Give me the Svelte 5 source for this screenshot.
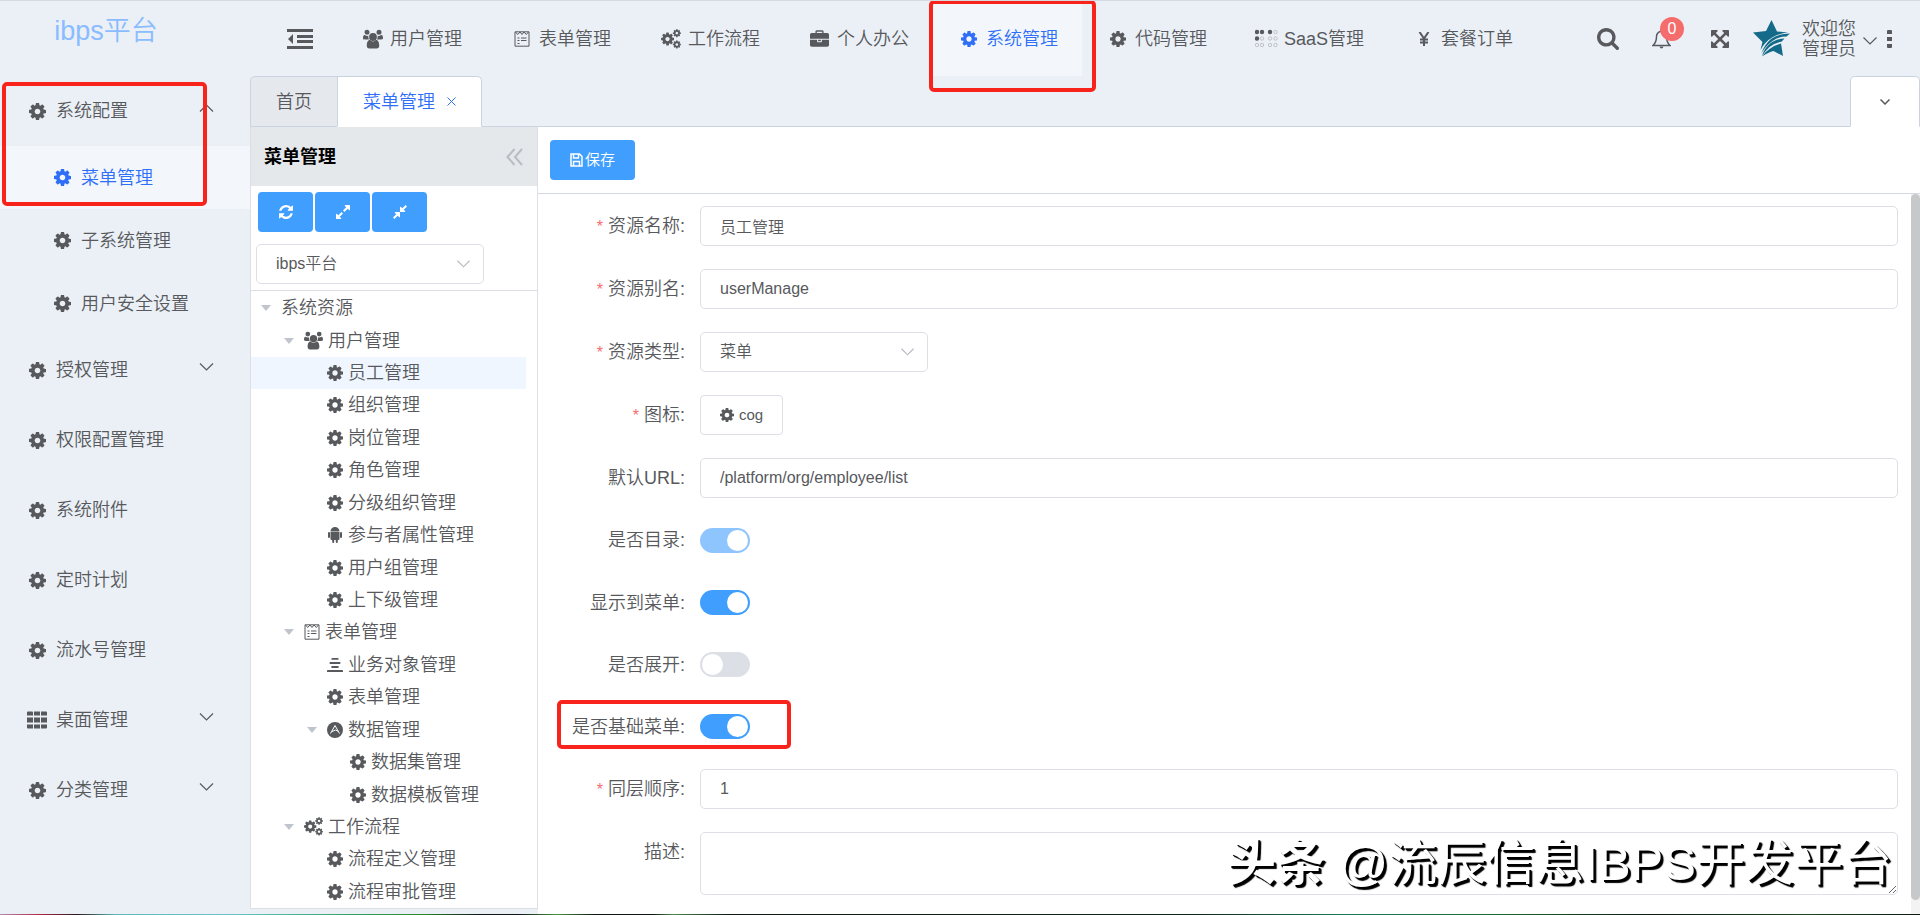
<script>
  const cog = 'M1152 896q0-106-75-181t-181-75-181 75-75 181 75 181 181 75 181-75 75-181zm512-109v222q0 12-8 23t-20 13l-185 28q-19 54-39 91 35 50 107 138 10 12 10 25t-9 23q-27 37-99 108t-94 71q-12 0-26-9l-138-108q-44 23-91 38-16 136-29 186-7 28-36 28h-222q-14 0-24.5-8.5t-11.5-21.5l-28-184q-49-16-90-37l-141 107q-10 9-25 9-14 0-25-11-126-114-165-168-7-10-7-23 0-12 8-23 15-21 51-66.5t54-70.5q-27-50-41-99l-183-27q-13-2-21-12.5t-8-23.5v-222q0-12 8-23t19-13l186-28q14-46 39-92-40-57-107-138-10-12-10-24 0-10 9-23 26-36 98.5-107.5t94.5-71.5q13 0 26 10l138 107q44-23 91-38 16-136 29-186 7-28 36-28h222q14 0 24.5 8.5t11.5 21.5l28 184q49 16 90 37l142-107q9-9 24-9 13 0 25 10 129 119 165 170 7 8 7 22 0 12-8 23-15 21-51 66.5t-54 70.5q26 50 41 98l183 28q13 2 21 12.5t8 23.5z';

  // filled icons: viewBox + path
  const icons = {
    cog: { box: '128 128 1536 1536', d: cog },
    users: { box: '0 0 20 19', d: 'M10 3.6a3.9 3.9 0 1 1 0 7.8 3.9 3.9 0 0 1 0-7.8zM4 .2a2.5 2.5 0 1 1 0 5A2.5 2.5 0 0 1 4 .2zM16 .2a2.5 2.5 0 1 1 0 5 2.5 2.5 0 0 1 0-5zM3.8 16.2c0-3 .9-5.600 3.100-5.600.9.8 1.900 1.300 3.100 1.300s2.200-.5 3.100-1.300c2.200 0 3.100 2.600 3.100 5.600 0 1.700-1 2.700-2.500 2.700H6.300c-1.500 0-2.500-1-2.500-2.700zM0 8.800c0-2 .5-3.200 1.700-3.200.7.5 1.500.8 2.300.8.5 0 .9 0 1.300-.2-.1 1.400.1 2.700.8 3.700H1.900C.7 9.900 0 9.700 0 8.800zM20 8.800c0-2-.5-3.200-1.700-3.200-.7.5-1.500.8-2.300.8-.5 0-.9 0-1.300-.2.1 1.400-.1 2.700-.8 3.700h4.200c1.200 0 1.900-.2 1.900-1.100z' },
    briefcase: { box: '0 0 1792 1536', d: 'M640 256h512v-128h-512v128zm1152 640v480q0 66-47 113t-113 47h-1472q-66 0-113-47t-47-113v-480h672v160q0 26 19 45t45 19h320q26 0 45-19t19-45v-160h672zm-768 0v128h-256v-128h256zm768-480v384h-1792v-384q0-66 47-113t113-47h352v-160q0-40 28-68t68-28h576q40 0 68 28t28 68v160h352q66 0 113 47t47 113z' },
    refresh: { box: '128 128 1536 1536', d: 'M1639 1056q0 5-1 7-64 268-268 434.5t-478 166.5q-146 0-282.5-55t-243.5-157l-129 129q-19 19-45 19t-45-19-19-45v-448q0-26 19-45t45-19h448q26 0 45 19t19 45-19 45l-137 137q71 66 161 102t187 36q134 0 250-65t186-179q11-17 53-117 8-23 30-23h192q13 0 22.5 9.5t9.5 22.5zm25-800v448q0 26-19 45t-45 19h-448q-26 0-45-19t-19-45 19-45l138-138q-148-137-349-137-134 0-250 65t-186 179q-11 17-53 117-8 23-30 23h-199q-13 0-22.5-9.5t-9.5-22.5v-7q65-268 270-434.5t480-166.5q146 0 284 55.5t245 156.5l130-129q19-19 45-19t45 19 19 45z' },
    expand: { box: '128 128 1536 1536', d: 'M883 1056q0 13-10 23l-332 332 144 144q19 19 19 45t-19 45-45 19h-448q-26 0-45-19t-19-45v-448q0-26 19-45t45-19 45 19l144 144 332-332q10-10 23-10t23 10l114 114q10 10 10 23zm781-864v448q0 26-19 45t-45 19-45-19l-144-144-332 332q-10 10-23 10t-23-10l-114-114q-10-10-10-23t10-23l332-332-144-144q-19-19-19-45t19-45 45-19h448q26 0 45 19t19 45z' },
    compress: { box: '128 128 1536 1536', d: 'M896 960v448q0 26-19 45t-45 19-45-19l-144-144-332 332q-10 10-23 10t-23-10l-114-114q-10-10-10-23t10-23l332-332-144-144q-19-19-19-45t19-45 45-19h448q26 0 45 19t19 45zm755-672q0 13-10 23l-332 332 144 144q19 19 19 45t-19 45-45 19h-448q-26 0-45-19t-19-45v-448q0-26 19-45t45-19 45 19l144 144 332-332q10-10 23-10t23 10l114 114q10 10 10 23z' },
    search: { box: '64 128 1664 1664', d: 'M1216 832q0-185-131.5-316.5t-316.5-131.5-316.5 131.5-131.5 316.5 131.5 316.5 316.5 131.5 316.5-131.5 131.5-316.5zm512 832q0 52-38 90t-90 38q-54 0-90-38l-343-342q-179 124-399 124-143 0-273.5-55.5t-225-150-150-225-55.5-273.5 55.5-273.5 150-225 225-150 273.5-55.5 273.5 55.5 225 150 150 225 55.5 273.5q0 220-124 399l343 343q37 37 37 90z' },
    full: { box: '128 128 1536 1536', d: 'M1411 541l-355 355 355 355 144-144q29-31 70-14 39 17 39 59v448q0 26-19 45t-45 19h-448q-42 0-59-40-17-39 14-69l144-144-355-355-355 355 144 144q31 30 14 69-17 40-59 40h-448q-26 0-45-19t-19-45v-448q0-42 40-59 39-17 69 14l144 144 355-355-355-355-144 144q-19 19-45 19-12 0-24-5-40-17-40-59v-448q0-26 19-45t45-19h448q42 0 59 40 17 39-14 69l-144 144 355 355 355-355-144-144q-31-30-14-69 17-40 59-40h448q26 0 45 19t19 45v448q0 42-39 59-13 5-25 5-26 0-45-19z' },
    th: { box: '0 0 20 17', d: 'M1 0h4a1 1 0 0 1 1 1v3H0V1a1 1 0 0 1 1-1zM7 0h6v4H7zM14 0h5a1 1 0 0 1 1 1v3h-6zM0 6h6v5H0zM7 6h6v5H7zM14 6h6v5h-6zM0 13h6v4H1a1 1 0 0 1-1-1zM7 13h6v4H7zM14 13h6v3a1 1 0 0 1-1 1h-5z' },
    fold: { box: '0 0 26 20', d: 'M0 0h26v3H0zM10 6h16v3H10zM10 11h16v3H10zM0 17h26v3H0zM6 5v10L1 10z' },
    dots: { box: '0 0 5 18', d: 'M1 0h3q1 0 1 1v3H0V1q0-1 1-1zM0 7h5v4H0zM0 14h5v3q0 1-1 1H1q-1 0-1-1z' },
    android: { box: '0 0 14 16', d: 'M2.500 4.500a4.500 4.500 0 0 1 9 0zM2.500 5h9v7q0 1-1 1H9.800v2q0 1-1 1t-1-1v-2H6.200v2q0 1-1 1t-1-1v-2h-.7q-1 0-1-1zM1 5q1 0 1 1v4q0 1-1 1t-1-1V6q0-1 1-1zM13 5q1 0 1 1v4q0 1-1 1t-1-1V6q0-1 1-1z' },
    layers: { box: '0 0 18 16', d: 'M6 0h6q1 0 1 1v1H5V1q0-1 1-1zM3 4.500h12V7H3zM5 9h8v2.500H5zM1 13.500h16q1 0 1 1V16H0v-1.500q0-1 1-1z' },
    caret: { box: '0 0 10 6', d: 'M0 0h10L5 6z' }
  };

  const menus = [
    { label: '用户管理', icon: 'users', size: 20 },
    { label: '表单管理', icon: 'form', size: 16 },
    { label: '工作流程', icon: 'cogs', size: 20 },
    { label: '个人办公', icon: 'briefcase', size: 19 },
    { label: '系统管理', icon: 'cog', size: 16, active: true },
    { label: '代码管理', icon: 'cog', size: 16 },
    { label: 'SaaS管理', icon: 'saas', size: 23 },
    { label: '套餐订单', icon: 'yen', size: 12 }
  ];

  const groups = [
    {
      label: '系统配置',
      open: true,
      children: [
        { label: '菜单管理', active: true },
        { label: '子系统管理' },
        { label: '用户安全设置' }
      ]
    },
    { label: '授权管理', more: true },
    { label: '权限配置管理' },
    { label: '系统附件' },
    { label: '定时计划' },
    { label: '流水号管理' },
    { label: '桌面管理', icon: 'th', more: true },
    { label: '分类管理', more: true }
  ];

  const tree = [
    { label: '系统资源', level: 0, open: true },
    { label: '用户管理', level: 1, open: true, icon: 'users', size: 19 },
    { label: '员工管理', level: 2, icon: 'cog', active: true },
    { label: '组织管理', level: 2, icon: 'cog' },
    { label: '岗位管理', level: 2, icon: 'cog' },
    { label: '角色管理', level: 2, icon: 'cog' },
    { label: '分级组织管理', level: 2, icon: 'cog' },
    { label: '参与者属性管理', level: 2, icon: 'android' },
    { label: '用户组管理', level: 2, icon: 'cog' },
    { label: '上下级管理', level: 2, icon: 'cog' },
    { label: '表单管理', level: 1, open: true, icon: 'form', size: 16 },
    { label: '业务对象管理', level: 2, icon: 'layers' },
    { label: '表单管理', level: 2, icon: 'cog' },
    { label: '数据管理', level: 2, open: true, icon: 'data' },
    { label: '数据集管理', level: 3, icon: 'cog' },
    { label: '数据模板管理', level: 3, icon: 'cog' },
    { label: '工作流程', level: 1, open: true, icon: 'cogs', size: 19 },
    { label: '流程定义管理', level: 2, icon: 'cog' },
    { label: '流程审批管理', level: 2, icon: 'cog' }
  ];

  let form = $state({
    name: '员工管理',
    alias: 'userManage',
    type: '菜单',
    url: '/platform/org/employee/list',
    folder: true,
    visible: true,
    opened: false,
    base: true,
    sn: '1',
    desc: ''
  });
</script>

{#snippet icon(name, size = 16)}
  {#if name === 'cogs'}
    <svg class="icon" width={size} height={size} viewBox="0 0 20 20" aria-hidden="true">
      <g fill="currentColor" fill-rule="evenodd">
        <path transform="translate(-1 2.500) scale(.0084)" d={cog} />
        <path transform="translate(11.200 -.5) scale(.0052)" d={cog} />
        <path transform="translate(11.200 10.800) scale(.0052)" d={cog} />
      </g>
    </svg>
  {:else if name === 'form'}
    <svg class="icon" width={size} height={size} viewBox="0 0 16 16" fill="none" stroke="currentColor" aria-hidden="true">
      <path d="M1 .8h14v14.400H1zM1.500 1l2.200 2.500L6 1l2 2.500L10 1l2.300 2.500L14.500 1M3.500 7h2M7 7h5.500M3.500 9.500h2M7 9.500h5.500M3.500 12.500h2" />
    </svg>
  {:else if name === 'saas'}
    <svg class="icon" width={size} height="20" viewBox="0 0 23 20" aria-hidden="true">
      {#each [2, 7, 15, 20.5] as x, c}
        {#each [3, 9.5, 16] as y, r}
          {#if r === 0 && c < 3 || r === 1 && c === 0}
            <circle cx={x} cy={y} r="2.200" fill="currentColor" />
          {:else}
            <circle cx={x} cy={y} r="1.700" fill="none" stroke="#b4b8bd" stroke-width=".8" />
          {/if}
        {/each}
      {/each}
    </svg>
  {:else if name === 'yen'}
    <svg class="icon" width={size} height="14" viewBox="0 0 12 14" fill="none" stroke="currentColor" stroke-width="2" aria-hidden="true">
      <path d="M1.500 0L6 6.500 10.500 0M6 6v8M2 7.500h8M2 10.500h8" />
    </svg>
  {:else if name === 'data'}
    <svg class="icon" width={size} height={size} viewBox="0 0 16 16" aria-hidden="true">
      <circle cx="8" cy="8" r="8" fill="currentColor" />
      <path d="M3.500 11.500L8 3.500l4.500 8M5 9.500q4-3 6.500 0" fill="none" stroke="#fff" />
    </svg>
  {:else}
    <svg class="icon" width={size} height={size} viewBox={icons[name].box} fill="currentColor" fill-rule="evenodd" aria-hidden="true">
      <path d={icons[name].d} />
    </svg>
  {/if}
{/snippet}

{#snippet chevron(width = 14, up = false)}
  <svg class="icon" {width} height="8" viewBox="0 0 14 8" fill="none" stroke="currentColor" stroke-width="1.200" aria-hidden="true">
    <path d={up ? 'M.5 7.500L7 1l6.500 6.500' : 'M.5 .5L7 7 13.500.5'} />
  </svg>
{/snippet}

{#snippet toggle(id, label, key, disabled = false)}
  <div class="field">
    <label for={id}>{label}:</label>
    <input {id} class="switch" type="checkbox" role="switch" bind:checked={form[key]} {disabled} />
    {#if key === 'base'}<span class="mark mark-field"></span>{/if}
  </div>
{/snippet}

<div class="app">
  <div class="layout">
    <aside class="sidebar">
      <div class="logo">ibps平台</div>
      <nav class="side-menu" aria-label="系统管理">
        <span class="mark mark-side"></span>
        {#each groups as group}
          <a class="group" href="#menu">
            <span class="side-icon">{@render icon(group.icon ?? 'cog', group.icon ? 20 : 17)}</span>
            <span>{group.label}</span>
            {#if group.open || group.more}
              <span class="arrow">{@render chevron(15, group.open)}</span>
            {/if}
          </a>
          {#each group.children ?? [] as child}
            <a class="child" class:active={child.active} href="#menu">
              <span class="side-icon">{@render icon('cog', 17)}</span>
              <span>{child.label}</span>
            </a>
          {/each}
        {/each}
      </nav>
    </aside>

    <div class="content">
      <header class="topbar">
        <button class="plain fold" type="button" aria-label="折叠菜单">
          <svg width="26" height="20" viewBox={icons.fold.box} fill="currentColor"><path d={icons.fold.d} /></svg>
        </button>
        <nav class="top-menu">
          {#each menus as item}
            <a class="top-item" class:active={item.active} href="#top">
              <span class="top-icon">{@render icon(item.icon, item.size)}</span>
              <span>{item.label}</span>
              {#if item.active}<span class="mark mark-top"></span>{/if}
            </a>
          {/each}
        </nav>
        <div class="tools">
          <button class="plain search" type="button" aria-label="搜索">{@render icon('search', 22)}</button>
          <button class="plain bell" type="button" aria-label="消息">
            <svg width="19" height="20" viewBox="0 0 19 20" fill="none" stroke="currentColor" stroke-width="1.500">
              <path d="M1 16.500h17q-3.500-3-3.500-9 0-4-5-5.500-5 1.500-5 5.500 0 6-3.500 9zM9.500 2V.5" />
              <path d="M7.500 17.500h4q-.5 2-2 2t-2-2z" fill="currentColor" stroke="none" />
            </svg>
            <span class="badge">0</span>
          </button>
          <button class="plain full" type="button" aria-label="全屏">{@render icon('full', 18)}</button>
          <button class="plain user" type="button">
            <svg width="37" height="37" viewBox="0 0 37 37" fill="#146a89" aria-hidden="true">
              <path d="M18.500 0L24 11.500l11 1q-8 .5-15 4.500Q12 21.500 7.500 30l2-8L0 12.500l13-1.500z" />
              <path d="M37 13.500l-3.500 3q-8 0-14 4.500-6.500 4.500-11 12 3-8.500 9.500-14 7.500-5.500 19-5.500z" />
              <path d="M31.500 18.500l-3 3.200q-7.500 1.300-12 5.300-3.500 3-7.500 9 2-7 7-11.500 6-5.500 15.500-6z" />
              <path d="M28 23.500l2 12.500-9.500-5q-5 1-11.500 5.500 3.500-5 7.500-7.500 4-3.500 11.500-5.500z" />
            </svg>
            <span class="welcome">欢迎您<br />管理员</span>
            <span class="user-arrow">{@render chevron(14)}</span>
          </button>
          <button class="plain more" type="button" aria-label="更多">
            <svg width="5" height="18" viewBox={icons.dots.box} fill="currentColor"><path d={icons.dots.d} /></svg>
          </button>
        </div>
      </header>

      <div class="tabs">
        <button class="tab first" type="button">首页</button>
        <button class="tab current" type="button">
          菜单管理
          <svg width="9" height="9" viewBox="0 0 9 9" stroke="currentColor" aria-hidden="true"><path d="M.5 .5l8 8M8.500 .5l-8 8" /></svg>
        </button>
        <span class="tab-line"></span>
        <button class="tab drop" type="button" aria-label="标签操作">
          <svg width="10" height="6" viewBox="0 0 10 6" fill="none" stroke="currentColor" stroke-width="1.500"><path d="M.5 .5L5 5 9.500 .5" /></svg>
        </button>
      </div>

      <div class="work">
        <section class="panel">
          <div class="panel-head">
            <h2>菜单管理</h2>
            <button class="plain collapse" type="button" aria-label="收起">
              <svg width="17" height="18" viewBox="0 0 17 18" fill="none" stroke="currentColor" stroke-width="2"><path d="M8.500 1L1.500 9l7 8M16 1L9 9l7 8" /></svg>
            </button>
          </div>
          <div class="panel-tools">
            <button class="primary" type="button" aria-label="刷新">{@render icon('refresh', 14)}</button>
            <button class="primary" type="button" aria-label="展开">{@render icon('expand', 14)}</button>
            <button class="primary" type="button" aria-label="折叠">{@render icon('compress', 14)}</button>
          </div>
          <div class="platform">
            <div class="select">
              <select aria-label="平台"><option>ibps平台</option></select>
              <span>{@render chevron(13)}</span>
            </div>
          </div>
          <ul class="tree">
            {#each tree as node}
              <li class:active={node.active} style="padding-left: {10 + node.level * 23}px">
                <span class="caret">{#if node.open}{@render icon('caret', 10)}{/if}</span>
                {#if node.icon}{@render icon(node.icon, node.size ?? 16)}{/if}
                <span>{node.label}</span>
              </li>
            {/each}
          </ul>
        </section>

        <section class="editor">
          <div class="toolbar">
            <button class="primary save" type="button">
              <svg width="13" height="14" viewBox="0 0 13 14" fill="none" stroke="currentColor" stroke-width="1.500" aria-hidden="true"><path d="M1 1h8.500L12 3.500V13H1zM3.500 1v4h5V1M3.500 13V8.500h6V13" /></svg>
              <span>保存</span>
            </button>
          </div>
          <div class="scroll">
            <form class="form">
              <div class="field required">
                <label for="name">资源名称:</label>
                <input id="name" class="text" type="text" bind:value={form.name} />
              </div>
              <div class="field required">
                <label for="alias">资源别名:</label>
                <input id="alias" class="text" type="text" bind:value={form.alias} />
              </div>
              <div class="field required">
                <label for="type">资源类型:</label>
                <div class="select">
                  <select id="type" bind:value={form.type}><option>菜单</option></select>
                  <span>{@render chevron(13)}</span>
                </div>
              </div>
              <div class="field required">
                <label for="icon">图标:</label>
                <button id="icon" class="pick" type="button">{@render icon('cog', 14)}<span>cog</span></button>
              </div>
              <div class="field">
                <label for="url">默认URL:</label>
                <input id="url" class="text" type="text" bind:value={form.url} />
              </div>
              {@render toggle('folder', '是否目录', 'folder', true)}
              {@render toggle('visible', '显示到菜单', 'visible')}
              {@render toggle('opened', '是否展开', 'opened')}
              {@render toggle('base', '是否基础菜单', 'base')}
              <div class="field required">
                <label for="sn">同层顺序:</label>
                <input id="sn" class="text" type="text" bind:value={form.sn} />
              </div>
              <div class="field">
                <label for="desc">描述:</label>
                <textarea id="desc" class="text" bind:value={form.desc}></textarea>
              </div>
            </form>
            <div class="scrollbar"><div class="thumb"></div></div>
          </div>
        </section>
      </div>
    </div>
  </div>
  <div class="strip"></div>
  <div class="watermark"><b>头条</b> @流辰信息IBPS开发平台</div>
</div>

<style>
  :global(body) {
    background: #ebf0f6;
  }

  .app {
    position: relative;
    display: flex;
    flex-direction: column;
    height: 100vh;
    min-height: 860px;
    box-sizing: border-box;
    border-top: 1px solid #d5dae1;
    overflow: hidden;
    color: #57595d;
    font-family: 'Liberation Sans', 'Noto Sans CJK SC', sans-serif;
    font-size: 18px;
    font-weight: 350;
    line-height: 24px;
  }

  .app *,
  .app *::before {
    box-sizing: border-box;
  }

  a {
    color: inherit;
    text-decoration: none;
  }

  button,
  input,
  select,
  textarea {
    margin: 0;
    color: inherit;
    font: inherit;
  }

  button {
    cursor: pointer;
  }

  .icon,
  svg {
    display: block;
    flex: none;
  }

  .plain {
    display: flex;
    align-items: center;
    padding: 0;
    border: 0;
    background: none;
  }

  .layout {
    display: grid;
    flex: 1;
    grid-template-columns: 250px minmax(0, 1fr);
    min-height: 0;
  }

  /* sidebar */
  .logo {
    height: 75px;
    padding: 12px 38px 0 0;
    color: #8abcff;
    font-size: 27px;
    line-height: 36px;
    text-align: center;
  }

  .side-menu {
    position: relative;
    display: flex;
    flex-direction: column;
  }

  .group,
  .child {
    display: flex;
    align-items: center;
    height: 70px;
    padding: 0 36px 0 27px;
  }

  .child {
    height: 63px;
    padding-left: 52px;
  }

  .child.active,
  .top-item.active {
    background: #f3f7fb;
    color: #2f6ff8;
  }

  .side-icon {
    display: flex;
    justify-content: center;
    width: 20px;
    margin-right: 9px;
  }

  .arrow {
    margin-left: auto;
    padding-bottom: 6px;
  }

  /* red callouts lie over the page */
  .mark {
    position: absolute;
    z-index: 2;
    border: 4px solid #f8241b;
    border-radius: 5px;
    pointer-events: none;
  }

  .mark-side {
    top: 6px;
    left: 2px;
    width: 205px;
    height: 124px;
  }

  .mark-top {
    top: -1px;
    left: -4px;
    right: -14px;
    height: 92px;
  }

  .mark-field {
    top: -7px;
    left: 19px;
    width: 234px;
    height: 49px;
  }

  /* top bar */
  .content {
    display: flex;
    flex-direction: column;
    min-width: 0;
    min-height: 0;
  }

  .topbar {
    display: flex;
    height: 75px;
    padding: 0 28px 0 37px;
  }

  .fold {
    margin-right: 24px;
  }

  .top-menu {
    display: flex;
  }

  .top-item {
    position: relative;
    display: flex;
    align-items: center;
    padding: 0 24px;
  }

  .top-icon {
    display: flex;
    justify-content: center;
    width: 23px;
    margin-right: 6px;
  }

  .tools {
    display: flex;
    align-items: center;
    margin-left: auto;
  }

  .search {
    margin-right: 33px;
  }

  .bell {
    position: relative;
    margin-right: 40px;
  }

  .badge {
    position: absolute;
    top: -12px;
    left: 8px;
    width: 24px;
    height: 24px;
    border-radius: 12px;
    background: #f56c6c;
    color: #fff;
    font-size: 16px;
    text-align: center;
  }

  .full {
    margin-right: 24px;
  }

  .welcome {
    margin: 0 7px 0 12px;
    line-height: 20px;
    text-align: left;
  }

  .user-arrow {
    margin-right: 10px;
    padding-top: 4px;
  }

  /* tabs */
  .tabs {
    display: flex;
    height: 51px;
  }

  .tab {
    display: flex;
    align-items: center;
    padding: 0 25px;
    border: 1px solid #cbd3e3;
    background: #e5e8ec;
  }

  .tab.first {
    border-right: 0;
    border-radius: 5px 0 0;
  }

  .tab.current {
    gap: 12px;
    border-bottom-color: #fff;
    border-radius: 0 5px 0 0;
    background: #fff;
    color: #2f6ff8;
  }

  .tab-line {
    flex: 1;
    border-bottom: 1px solid #cbd3e3;
  }

  .tab.drop {
    justify-content: center;
    width: 70px;
    padding: 0;
    border-bottom-color: #fff;
    border-radius: 5px 5px 0 0;
    background: #fff;
  }

  .work {
    display: flex;
    flex: 1;
    min-height: 0;
  }

  /* resource panel */
  .panel {
    display: flex;
    flex: none;
    flex-direction: column;
    width: 288px;
    margin-bottom: 5px;
    border: solid #dcdfe6;
    border-width: 0 1px 1px;
    background: #fff;
  }

  .panel-head {
    display: flex;
    align-items: center;
    justify-content: space-between;
    height: 59px;
    padding: 0 14px 0 13px;
    background: #e4e8eb;
  }

  h2 {
    margin: 0;
    color: #000;
    font-size: 18px;
    font-weight: 700;
  }

  .collapse {
    color: #b9bdc2;
  }

  .panel-tools {
    display: flex;
    gap: 2px;
    padding: 6px 7px 0;
  }

  .primary {
    display: flex;
    align-items: center;
    justify-content: center;
    width: 55px;
    height: 40px;
    padding: 0;
    border: 0;
    border-radius: 4px;
    background: #409eff;
    color: #fff;
  }

  .platform {
    padding: 12px 5px 6px;
    border-bottom: 1px solid #dcdfe6;
  }

  .select {
    position: relative;
    width: 228px;
  }

  .select select {
    display: block;
    width: 100%;
    height: 40px;
    padding: 0 40px 0 19px;
    border: 1px solid #dcdfe6;
    border-radius: 5px;
    appearance: none;
    background: #fff;
    font-size: 16px;
  }

  .select span {
    position: absolute;
    top: 16px;
    right: 14px;
    color: #b4b9c2;
    pointer-events: none;
  }

  .tree {
    display: grid;
    flex: 1;
    grid-auto-rows: minmax(28px, 1fr);
    margin: 0;
    padding: 1px 11px 0 0;
    list-style: none;
  }

  .tree li {
    display: flex;
    gap: 5px;
    align-items: center;
  }

  .tree li.active {
    background: #eff6ff;
  }

  .caret {
    width: 15px;
    color: #c0c4cc;
  }

  /* editor */
  .editor {
    display: flex;
    flex: 1;
    flex-direction: column;
    min-width: 0;
    background: #fff;
  }

  .toolbar {
    height: 67px;
    padding: 13px 12px;
    border-bottom: 1px solid #d3d8e2;
  }

  .save {
    gap: 2px;
    width: 85px;
    font-size: 15px;
  }

  .scroll {
    display: flex;
    flex: 1;
    min-height: 0;
  }

  .form {
    display: flex;
    flex: 1;
    flex-direction: column;
    justify-content: space-between;
    min-width: 0;
    padding: 12px 13px 19px 0;
  }

  .field {
    position: relative;
    display: flex;
    min-height: 40px;
  }

  .field label {
    flex: none;
    width: 162px;
    padding-right: 15px;
    line-height: 40px;
    text-align: right;
  }

  .required label::before {
    content: '*';
    margin-right: 5px;
    color: #f56c6c;
    font-size: 16px;
  }

  .text {
    flex: 1;
    min-width: 0;
    height: 40px;
    padding: 0 19px;
    border: 1px solid #dcdfe6;
    border-radius: 5px;
    outline: none;
    background: #fff;
    font-size: 16px;
  }

  textarea.text {
    height: 63px;
    padding: 8px 19px;
    resize: vertical;
  }

  .pick {
    display: flex;
    gap: 5px;
    align-items: center;
    height: 40px;
    padding: 0 19px;
    border: 1px solid #dcdfe6;
    border-radius: 4px;
    background: #fff;
    font-size: 15px;
  }

  .switch {
    align-self: center;
    width: 50px;
    height: 25px;
    padding: 2px;
    border-radius: 13px;
    appearance: none;
    background: #dcdfe6;
  }

  .switch::before {
    display: block;
    width: 21px;
    height: 21px;
    border-radius: 50%;
    background: #fff;
    content: '';
  }

  .switch:checked {
    background: #409eff;
  }

  .switch:checked::before {
    margin-left: auto;
  }

  .switch:disabled {
    background: #8fc5ff;
  }

  .scrollbar {
    width: 9px;
    background: #f3f3f4;
  }

  .thumb {
    height: 98%;
    border-radius: 5px;
    background: #c6c8ca;
  }

  .strip {
    height: 1px;
    background: linear-gradient(90deg, #b48aa8, #b3294a 2%, #2a1a1c 4%, #5fb8b8 6%, #6cc4c8 12%, #3da878 17%, #2a8a2a 22%, #10151a 25%, #10151a 27%, #4a9440 29%, #0d1512 31%, #0d1512 34%, #4b8d4b 35%, #0c1813 38%, #10251c 62%, #1e7a5a 70%, #1e6a30 78%, #0c1a10 86%, #1d4a22 94%, #0c1a10);
  }

  .watermark {
    position: absolute;
    right: 28px;
    bottom: 16px;
    color: #fff;
    font-size: 49px;
    font-weight: 400;
    line-height: 72px;
    text-shadow: 2px 2px 0 #000, 3px 3px 1px #000;
    white-space: nowrap;
    pointer-events: none;
  }
</style>
